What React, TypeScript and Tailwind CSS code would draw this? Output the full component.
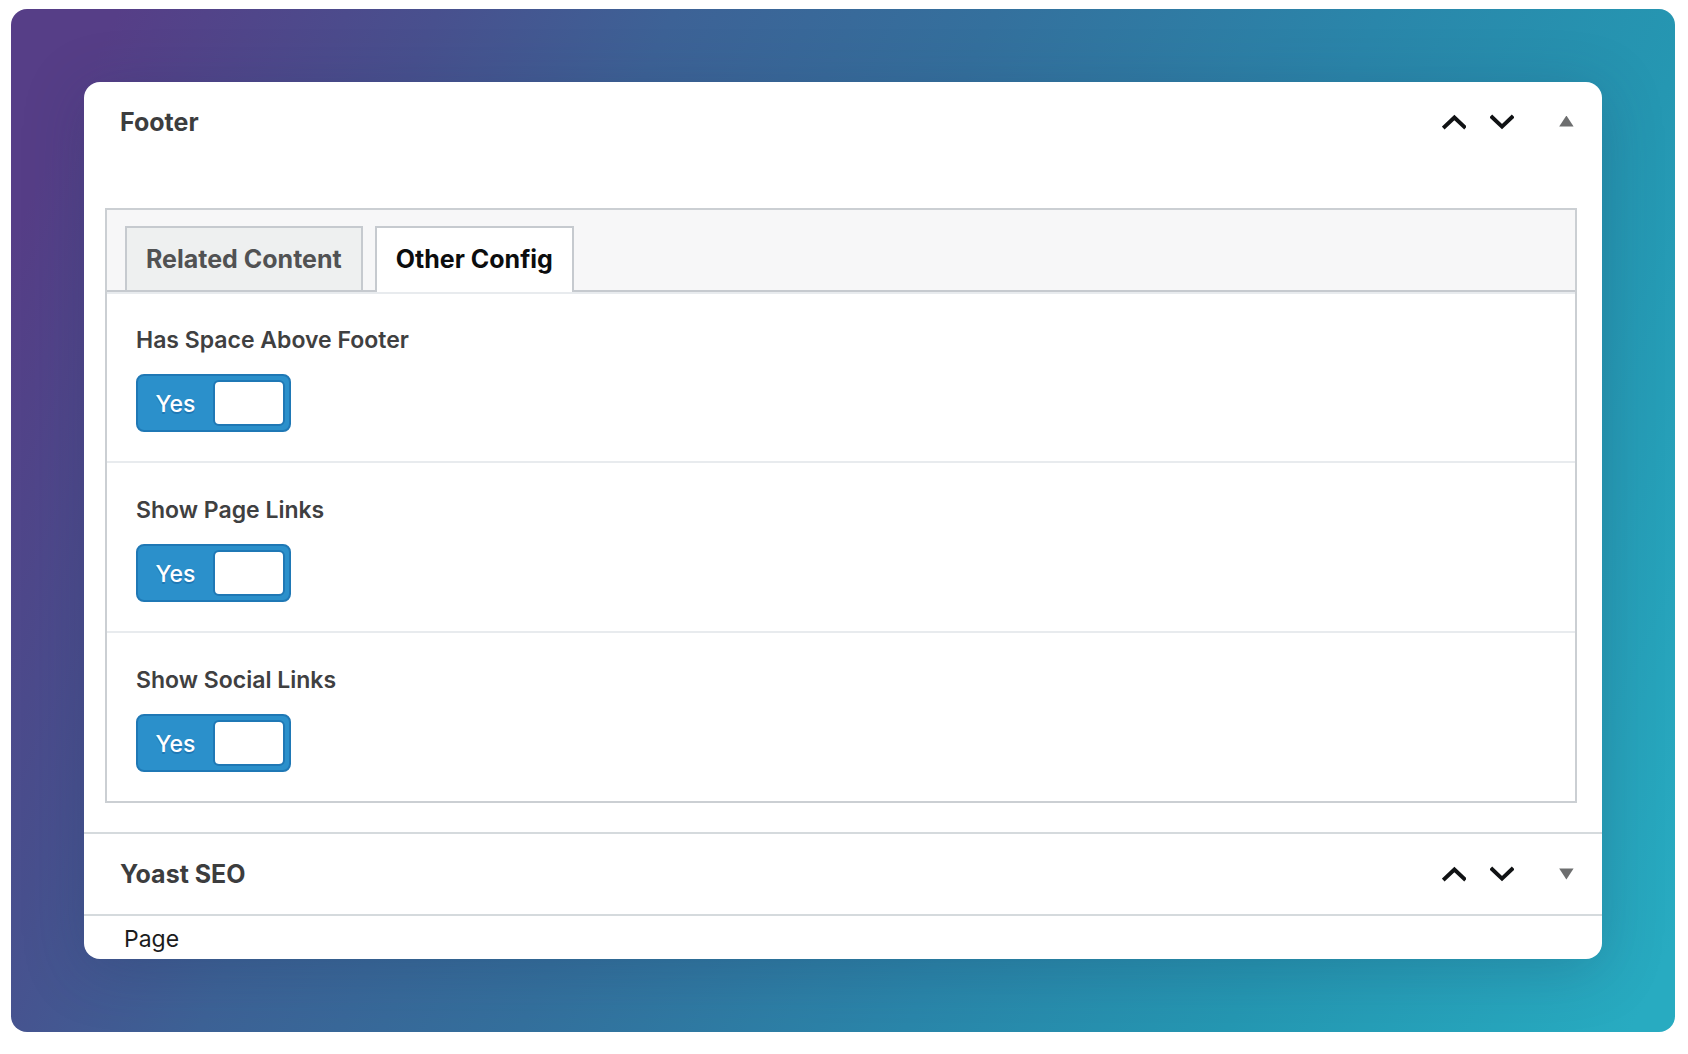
import { useState } from "react";

const tabs = ["Related Content", "Other Config"];

const fields = [
  { id: "has-space-above-footer", label: "Has Space Above Footer" },
  { id: "show-page-links", label: "Show Page Links" },
  { id: "show-social-links", label: "Show Social Links" },
];

function Chevron({ up = false }: { up?: boolean }) {
  return (
    <svg className="h-4 w-6" viewBox="0 0 24 16" fill="none" stroke="#101214" strokeWidth="4" aria-hidden="true">
      <path d={up ? "M1.2 14 12.4 3.6 23.6 14" : "M0.8 2 12 12.6 23.2 2"} />
    </svg>
  );
}

function PanelHeader({ title, open, onToggle }: { title: string; open: boolean; onToggle: () => void }) {
  return (
    <div className="flex h-20 items-center justify-between pr-7 pl-9">
      <h2 className="text-[25px] leading-8 font-bold text-[#3c3d3e]">{title}</h2>
      <div className="flex items-center">
        <button type="button" className="flex w-12 justify-center" aria-label={`Move ${title} up`}>
          <Chevron up />
        </button>
        <button type="button" className="flex w-12 justify-center" aria-label={`Move ${title} down`}>
          <Chevron />
        </button>
        <button type="button" className="ml-8 flex w-4 justify-center" aria-expanded={open} aria-label={`Toggle ${title}`} onClick={onToggle}>
          <svg className="h-3 w-4" viewBox="0 0 16 12" fill="#6d6e6f" aria-hidden="true">
            <path d={open ? "M8.4 -0.5 15.6 10.5H1.2Z" : "M8.4 11.5 15.6 0.5H1.2Z"} />
          </svg>
        </button>
      </div>
    </div>
  );
}

function SwitchField({ id, label }: { id: string; label: string }) {
  const [on, setOn] = useState(true);

  return (
    <div className="border-t-2 border-[#e8ebee] px-[29px] pt-[31px] pb-[29px] first:pt-[30px]">
      <label htmlFor={id} className="block text-[23px] leading-8 font-semibold text-[#3f4041]">
        {label}
      </label>
      <label
        className={
          on
            ? "mt-[18px] flex h-[58px] w-[155px] cursor-pointer items-center rounded-lg border-2 border-[#1f78b5] bg-[#2b90cb] py-1 pr-1 text-white"
            : "mt-[18px] flex h-[58px] w-[155px] cursor-pointer flex-row-reverse items-center rounded-lg border-2 border-[#7e8993] bg-[#f5f5f5] py-1 pl-1 text-[#3c3d3e]"
        }
      >
        <input id={id} type="checkbox" role="switch" className="sr-only" checked={on} onChange={(e) => setOn(e.target.checked)} />
        <span
          className={
            on
              ? "flex-1 pt-0.5 text-center text-[23px] leading-8 font-medium [text-shadow:0_2px_0_#1f78b5]"
              : "flex-1 pt-0.5 text-center text-[23px] leading-8 font-medium"
          }
        >
          {on ? "Yes" : "No"}
        </span>
        <span className="h-full w-[72px] rounded-md border-2 border-[#1f78b5] bg-white" />
      </label>
    </div>
  );
}

export default function App() {
  const [activeTab, setActiveTab] = useState("Other Config");
  const [footerOpen, setFooterOpen] = useState(true);
  const [seoOpen, setSeoOpen] = useState(false);

  return (
    <main className="bg-white pt-[9px] pr-[13px] pb-[22px] pl-[11px] font-['Inter','Liberation_Sans',sans-serif]">
      <div className="rounded-2xl bg-linear-[115deg,#563e87_5%,#48508e_20%,#3d6296_31%,#34709d_46%,#2a86aa_64%,#2597b2_79%,#28abc1_98%] p-[73px]">
        <div className="overflow-hidden rounded-2xl bg-white shadow-[0_10px_60px_rgba(30,50,90,0.25)]">
          <section>
            <PanelHeader title="Footer" open={footerOpen} onToggle={() => setFooterOpen(!footerOpen)} />
            {footerOpen ? (
              <div className="pt-[46px] pr-[25px] pb-[29px] pl-[21px]">
                <div className="border-2 border-[#cbcfd3]">
                  <div role="tablist" className="flex items-end gap-3 border-b-2 border-[#c6cacf] bg-[#f7f7f8] px-[18px] pt-4">
                    {tabs.map((tab) => (
                      <button
                        key={tab}
                        type="button"
                        role="tab"
                        aria-selected={tab === activeTab}
                        className={
                          tab === activeTab
                            ? "-mb-0.5 h-[66px] border-2 border-b-0 border-[#c6cacf] bg-white px-[19px] text-[25px] font-bold text-[#0c0d0e]"
                            : "h-16 border-2 border-b-0 border-[#c6cacf] bg-[#eef0f0] px-[19px] pt-0.5 text-[25px] font-bold text-[#515253]"
                        }
                        onClick={() => setActiveTab(tab)}
                      >
                        {tab}
                      </button>
                    ))}
                  </div>
                  <div role="tabpanel">
                    {fields.map((field) => (
                      <SwitchField key={field.id} id={field.id} label={field.label} />
                    ))}
                  </div>
                </div>
              </div>
            ) : null}
          </section>
          <section className="border-y-2 border-[#d5dadd]">
            <PanelHeader title="Yoast SEO" open={seoOpen} onToggle={() => setSeoOpen(!seoOpen)} />
          </section>
          <p className="px-10 pt-[7px] pb-1 text-[23px] leading-8 text-[#1b1c1d]">Page</p>
        </div>
      </div>
    </main>
  );
}
